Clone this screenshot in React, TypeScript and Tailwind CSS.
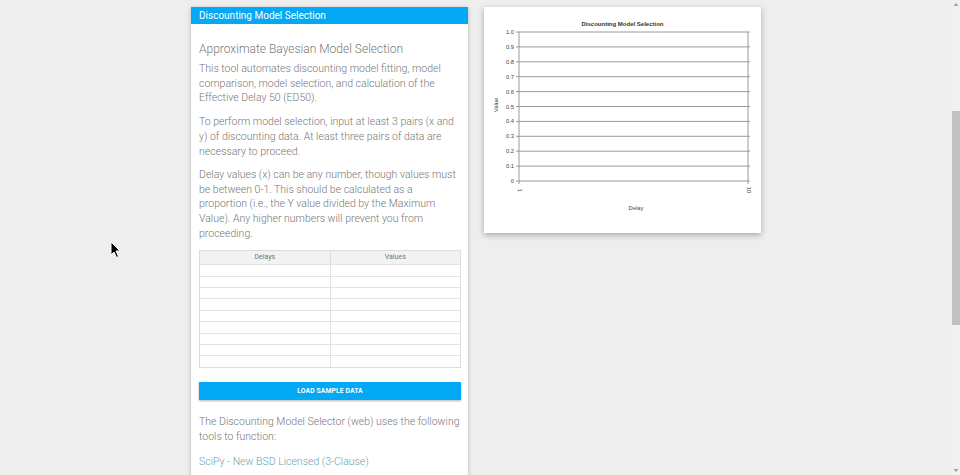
import React from "react";

const font = { fontFamily: "Roboto, 'Noto Sans', 'Liberation Sans', sans-serif" };

function Chart() {
  const left = 35;
  const right = 264;
  const top = 25;
  const bottom = 174;
  const step = (bottom - top) / 10;
  const labels = ["1.0", "0.9", "0.8", "0.7", "0.6", "0.5", "0.4", "0.3", "0.2", "0.1", "0"];
  return (
    <svg width="277" height="226" viewBox="0 0 277 226" style={{ fontFamily: "'Liberation Sans', Arial, sans-serif" }}>
      <text x="138.5" y="18.5" textAnchor="middle" fontSize="6" fontWeight="bold" fill="#333">
        Discounting Model Selection
      </text>
      {labels.map((l, i) => {
        const y = top + i * step;
        return (
          <g key={l}>
            <line x1={left - 3} x2={right + 2} y1={y} y2={y} stroke="#999" strokeWidth="1" />
            <text x={left - 5} y={y + 2} textAnchor="end" fontSize="5.8" fill="#444">
              {l}
            </text>
          </g>
        );
      })}
      <line x1={left} x2={left} y1={top} y2={bottom + 3} stroke="#999" strokeWidth="1" />
      <line x1={right} x2={right} y1={top} y2={bottom + 3} stroke="#999" strokeWidth="1" />
      <text x="0" y="0" fontSize="5.8" fill="#444" textAnchor="middle" transform={`translate(${left - 1},${bottom + 9}) rotate(90)`}>
        1
      </text>
      <text x="0" y="0" fontSize="5.8" fill="#444" textAnchor="middle" transform={`translate(${right - 1},${bottom + 9}) rotate(90)`}>
        10
      </text>
      <text x="152" y="203" textAnchor="middle" fontSize="5.8" fill="#444">
        Delay
      </text>
      <text x="0" y="0" fontSize="5.8" fill="#444" textAnchor="middle" transform="translate(14,98) rotate(-90)">
        Value
      </text>
    </svg>
  );
}

export default function App() {
  const rows = Array.from({ length: 9 });
  return (
    <div className="relative h-[475px] w-[960px] overflow-hidden bg-[#eeeeee]" style={font}>
      <div className="flex justify-center gap-4 pr-2 pt-[7px]">
        {/* Left card */}
        <div className="h-[480px] w-[277px] bg-white shadow-[0_1px_4px_rgba(0,0,0,0.25)]">
          <div className="flex h-[17px] items-center bg-[#03a9f4] px-2 text-[10px] text-white">
            Discounting Model Selection
          </div>
          <div className="pl-2 pr-[7px] font-light text-[#777]">
            <h2 className="mt-[17px] text-[12px] leading-[17px] text-[#7a7a7a]">Approximate Bayesian Model Selection</h2>
            <p className="mt-[4px] text-[10.5px] leading-[14.7px]">
              This tool automates discounting model fitting, model comparison, model selection, and calculation of the
              Effective Delay 50 (ED50).
            </p>
            <p className="mt-[9px] text-[10.5px] leading-[14.7px]">
              To perform model selection, input at least 3 pairs (x and y) of discounting data. At least three pairs of
              data are necessary to proceed.
            </p>
            <p className="mt-[9px] text-[10.5px] leading-[14.6px]">
              Delay values (x) can be any number, though values must be between 0-1. This should be calculated as a
              proportion (i.e., the Y value divided by the Maximum Value). Any higher numbers will prevent you from
              proceeding.
            </p>
            <div className="mt-[9px] border border-[#dddddd]">
              <div className="flex h-[13px] bg-[#f2f2f2] text-[7px] font-normal text-[#777]">
                <div className="flex flex-1 items-center justify-center border-r border-[#dddddd]">Delays</div>
                <div className="flex flex-1 items-center justify-center">Values</div>
              </div>
              {rows.map((_, i) => (
                <div key={i} className="flex h-[11.4px] border-t border-[#e3e3e3]">
                  <div className="flex-1 border-r border-[#e3e3e3]" />
                  <div className="flex-1" />
                </div>
              ))}
            </div>
            <button className="mt-[14px] flex h-[18px] w-full items-center justify-center bg-[#03a9f4] text-[6.8px] font-bold tracking-[0.1px] text-white shadow-[0_1px_2px_rgba(0,0,0,0.3)]">
              LOAD SAMPLE DATA
            </button>
            <p className="mt-[15.5px] text-[10.5px] leading-[14.7px]">
              The Discounting Model Selector (web) uses the following tools to function:
            </p>
            <p className="mt-[10.3px] text-[10.5px] leading-[14.7px] text-[#6e9fae]">SciPy - New BSD Licensed (3-Clause)</p>
          </div>
        </div>
        {/* Right card */}
        <div className="h-[226px] w-[277px] bg-white shadow-[0_2px_6px_rgba(0,0,0,0.3)]">
          <Chart />
        </div>
      </div>

      {/* Scrollbar */}
      <div className="absolute right-0 top-0 h-[475px] w-2 bg-[#f1f1f1]">
        <svg className="absolute left-0 top-[2px]" width="8" height="5" viewBox="0 0 8 5">
          <polygon points="4,1 6.5,4 1.5,4" fill="#a3a3a3" />
        </svg>
        <div className="absolute left-0 top-[111px] h-[214px] w-2 bg-[#c1c1c1]" />
        <svg className="absolute bottom-[2px] left-0" width="8" height="5" viewBox="0 0 8 5">
          <polygon points="1.5,1 6.5,1 4,4" fill="#a3a3a3" />
        </svg>
      </div>

      {/* Cursor */}
      <svg className="absolute left-[110px] top-[241px]" width="12" height="18" viewBox="0 0 12 18">
        <path d="M1 1 L1 14 L4 11 L6.5 16.5 L8.5 15.5 L6 10 L10 10 Z" fill="#000" stroke="#fff" strokeWidth="1" />
      </svg>
    </div>
  );
}
